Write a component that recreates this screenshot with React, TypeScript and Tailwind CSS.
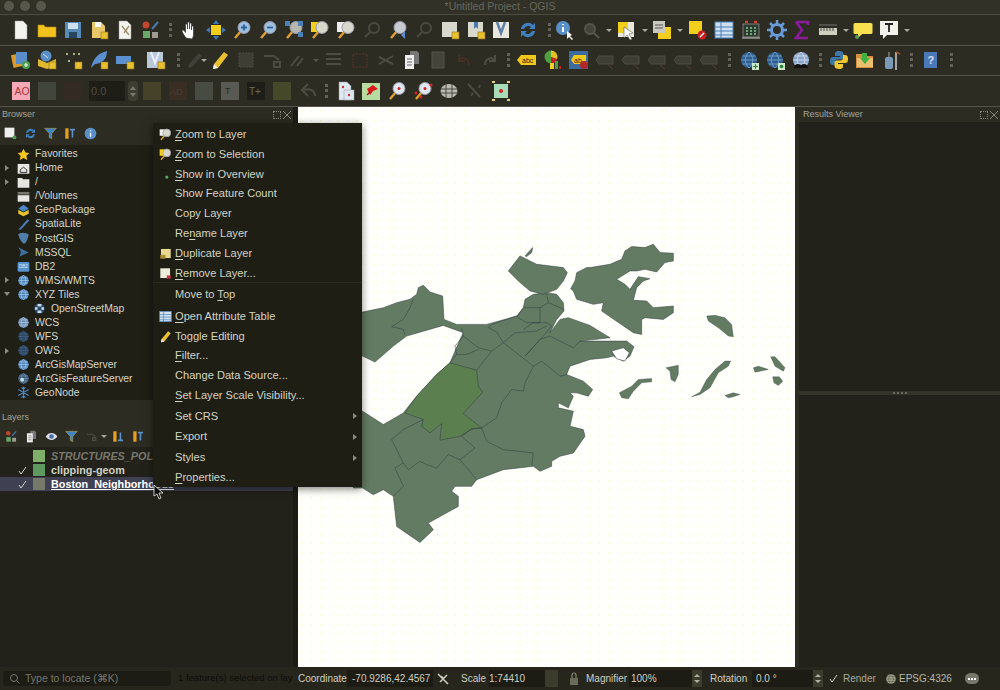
import React from "react";
import type { ReactNode } from "react";

const Mag = ({ c = "#d8d8d0", h = "#e0a030", k }: { c?: string; h?: string; k?: ReactNode }) => (
  <>
    <line x1="9" y1="11" x2="3" y2="18" stroke={h} strokeWidth="2.4" />
    <circle cx="12" cy="7.5" r="6" fill={c} stroke="#99a" strokeWidth="1" />
    {k}
  </>
);
const Doc = ({ c = "#f4f4ee" }: { c?: string }) => <path d="M4 1h8l4 4v14H4z" fill={c} stroke="#999" strokeWidth=".5" />;
const Badge = ({ c = "#e8c030" }: { c?: string }) => <rect x="12" y="12" width="7" height="7" fill={c} stroke="#8a7020" strokeWidth=".6" />;
const DimBox = () => <rect x="3" y="3" width="14" height="14" fill="#44443a" />;
const DimG = ({ d }: { d: string }) => <path d={d} fill="none" stroke="#4c4c42" strokeWidth="2" />;
const Globe = ({ c = "#4f86c0", l = "#a8cde8" }: { c?: string; l?: string }) => (
  <>
    <circle cx="10" cy="10" r="8" fill={c} />
    <path d="M2 10h16M10 2c-5 5-5 11 0 16M10 2c5 5 5 11 0 16M3.5 6h13M3.5 14h13" fill="none" stroke={l} strokeWidth=".8" />
  </>
);

const icons: Record<string, ReactNode> = {
  doc: <Doc />,
  folder: <path d="M1 5h6l1 2h11v10H1z" fill="#f2c31c" stroke="#b08a10" strokeWidth=".6" />,
  save: <><rect x="2" y="2" width="16" height="16" fill="#5a8ab8" /><rect x="5" y="3" width="10" height="6" fill="#cfe0ee" /><rect x="6" y="12" width="8" height="6" fill="#28445e" /></>,
  saveas: <><path d="M3 2h9l4 4v12H3z" fill="#e8c868" /><rect x="6" y="2" width="6" height="5" fill="#fff" /><Badge /></>,
  print: <><Doc /><path d="M7 6l7 9M14 6l-5 7" stroke="#a09070" strokeWidth="1.4" /></>,
  style: <><circle cx="5" cy="5" r="3.5" fill="#c0452c" /><path d="M11 9l6-7" stroke="#4a78b0" strokeWidth="2" /><rect x="2" y="11" width="7" height="7" fill="#68a868" /><rect x="11" y="12" width="6" height="6" fill="#a09a90" /></>,
  hand: <path d="M6 18c-2-3-4-6-4-7 0-1.500 1.500-1.500 2.500 0l1 1.500V5c0-1.500 2-1.500 2 0v4-6c0-1.500 2-1.500 2 0v6-5c0-1.500 2-1.500 2 0v6-3c0-1.500 2-1.500 2 0v7c0 3-1 4-1.500 5z" fill="#fff" stroke="#333" strokeWidth=".7" />,
  move: <><rect x="5" y="5" width="10" height="10" fill="#f2cf1c" /><path d="M10 0l3 4H7zM10 20l3-4H7zM0 10l4-3v6zM20 10l-4-3v6z" fill="#3e78b8" /></>,
  zin: <Mag c="#9cc0e0" k={<path d="M9 7.500h6M12 4.500v6" stroke="#2f5f98" strokeWidth="1.8" />} />,
  zout: <Mag c="#9cc0e0" k={<path d="M9 7.500h6" stroke="#2f5f98" strokeWidth="1.8" />} />,
  zfull: <><Mag c="#b8b8b0" /><path d="M1 1h5v5H1zM14 1h5v5h-5zM14 12h5v5h-5z" fill="#4a80b8" /></>,
  zsel: <><rect x="1" y="2" width="9" height="10" fill="#f2cf1c" /><Mag c="#d8d8cc" /></>,
  zlay: <><rect x="1" y="2" width="9" height="10" fill="#eee" /><Mag c="#d8d8cc" /></>,
  dimmag: <><circle cx="12" cy="8" r="5" fill="none" stroke="#4a4a40" strokeWidth="2" /><path d="M8 12l-5 5" stroke="#4a4a40" strokeWidth="2" /></>,
  zlast: <Mag c="#c8ccd0" k={<path d="M17 11l-4 4 4 4z" fill="#5a90d0" />} />,
  dimbox: <DimBox />,
  bookm: <><path d="M2 2h15v15H2z" fill="#d8d8cc" /><Badge /></>,
  bookm2: <><path d="M2 2h15v15H2z" fill="#d8d8cc" /><path d="M8 2h4v7l-2-2-2 2z" fill="#4a78b0" /><Badge /></>,
  halfdoc: <rect x="0" y="2" width="15" height="15" fill="#d8d8cc" />,
  vdoc: <><rect x="1" y="2" width="16" height="16" fill="#e8e8de" /><path d="M5 2l4 11 4-11" fill="none" stroke="#5f7fa8" strokeWidth="2.500" /></>,
  vdocb: <><rect x="1" y="2" width="16" height="16" fill="#b8c8d8" /><path d="M5 2l4 11 4-11" fill="none" stroke="#eef" strokeWidth="2" /><Badge /></>,
  refresh: <path d="M3 9a7 7 0 0 1 12-4l2-2v6h-6l2-2a4.500 4.500 0 0 0-7 2zM17 11a7 7 0 0 1-12 4l-2 2v-6h6l-2 2a4.500 4.500 0 0 0 7-2z" fill="#3f80c0" />,
  identify: <><circle cx="9" cy="8" r="7" fill="#5a90c8" /><path d="M9 4v1M9 7v5" stroke="#fff" strokeWidth="2" /><path d="M13 11l0 8 2-2 3 3 1-1-3-3 2-1z" fill="#fff" /></>,
  dimsearch: <><circle cx="9" cy="9" r="5" fill="#44443a" stroke="#56564a" strokeWidth="2" /><path d="M13 13l5 5" stroke="#56564a" strokeWidth="2" /></>,
  select: <><rect x="1" y="2" width="16" height="15" fill="#e8e8dc" /><rect x="1" y="2" width="10" height="11" fill="#f2cf1c" /><path d="M7 7l0 11 3-3 3 5 2-1-3-5 4-1z" fill="#fff" stroke="#444" strokeWidth=".5" /></>,
  selform: <><rect x="6" y="7" width="13" height="12" fill="#f2cf1c" /><rect x="1" y="1" width="12" height="12" fill="#c8c8c0" /><path d="M3 5h8M3 8h8" stroke="#555" strokeWidth="1" /></>,
  desel: <><rect x="1" y="1" width="13" height="13" fill="#f2cf1c" /><circle cx="14" cy="15" r="4.500" fill="#c82020" /><path d="M12 17l4-4" stroke="#fff" strokeWidth="1.200" /></>,
  table: <><rect x="1" y="2" width="18" height="16" fill="#cfe0f0" stroke="#4a80b8" /><path d="M1 7h18M1 11h18M1 15h18M7 2v16" stroke="#4a80b8" strokeWidth="1" /></>,
  toolbox: <><rect x="2" y="4" width="16" height="13" fill="#2e3a30" stroke="#aaa" strokeWidth=".6" /><path d="M4 2h3M13 2h3" stroke="#d04030" strokeWidth="2.500" /><path d="M5 8h2M9 8h2M13 8h2M5 11h2M9 11h2M13 11h2M5 14h2M9 14h2M13 14h2" stroke="#80d090" strokeWidth="1.500" /><path d="M1 18h18" stroke="#ccc" /></>,
  gear: <><circle cx="10" cy="10" r="5.500" fill="none" stroke="#6a9ad8" strokeWidth="3" /><path d="M10 0v4M10 16v4M0 10h4M16 10h4M3 3l3 3M14 14l3 3M17 3l-3 3M3 17l3-3" stroke="#6a9ad8" strokeWidth="2.500" /></>,
  sigma: <path d="M4 2h12v3M16 18H4l6-8-6-8" fill="none" stroke="#8a1c9c" strokeWidth="2.600" />,
  ruler: <><rect x="1" y="8" width="18" height="7" fill="#cfcfc0" /><path d="M3 8v3M6 8v3M9 8v3M12 8v3M15 8v3" stroke="#444" /><path d="M1 5h18" stroke="#777" /></>,
  balloon: <><path d="M2 3h16q1.500 0 1.500 1.500v8q0 1.500-1.500 1.500H9l-4 4v-4H2q-1.500 0-1.500-1.500v-8Q.5 3 2 3z" fill="#f8e050" /><circle cx="4" cy="17" r="2" fill="#5a9a5a" /></>,
  text: <><path d="M1 1h18v14H8l-4 4v-4H1z" fill="#f2f2ea" /><path d="M6 4h8M10 4v8" stroke="#222" strokeWidth="1.800" /></>,
  dsm: <><rect x="1" y="4" width="11" height="13" fill="#d89a30" transform="rotate(-12 6 10)" /><rect x="5" y="2" width="11" height="12" fill="#5a8ec8" /><circle cx="15" cy="15" r="4" fill="#4ca050" /><path d="M13 15h4M15 13v4" stroke="#fff" /></>,
  gpkg: <><path d="M1 9l9 4 9-4v7l-9 3-9-3z" fill="#e0b830" /><circle cx="9" cy="6" r="5.500" fill="#5a90c8" /><path d="M6 4l5 4" stroke="#ddd" /><Badge /></>,
  points: <><path d="M3 4h2M10 4h2M15 4h2" stroke="#cfe0b0" strokeWidth="1.600" /><path d="M5 11h2" stroke="#cfe0b0" strokeWidth="1.600" /><Badge /></>,
  feather: <><path d="M2 18C4 8 10 3 18 1c0 8-5 13-12 13z" fill="#5a90d0" /><Badge /></>,
  rectb: <><rect x="1" y="6" width="15" height="8" fill="#5a90d0" /><Badge /></>,
  pencil: <><path d="M14 2l4 3-10 13-5 1 1-5z" fill="#e8c030" /><path d="M3 19l1-5 4 4z" fill="#eee" /></>,
  pen2: <path d="M13 3l3 3-10 11-4 1 1-4z" fill="#40403a" />,
  dimsq: <rect x="3" y="3" width="14" height="14" fill="#3e3e34" stroke="#4a4a40" strokeDasharray="2 1" />,
  dimcar: <DimG d="M2 6h10l5 4M12 12h6v5h-6z" />,
  dimdiag: <DimG d="M3 16l8-10M9 16l6-8" />,
  dimlines: <DimG d="M2 4h15M2 9h15M2 14h15" />,
  dimred: <rect x="3" y="4" width="14" height="13" fill="none" stroke="#4a3028" strokeWidth="1.500" strokeDasharray="2 1" />,
  dimcut: <DimG d="M3 7l14 7M3 14l14-8" />,
  copyd: <><path d="M8 1h7l2 2v11H8z" fill="#777" /><path d="M3 5h9v14H3z" fill="#eee" /><path d="M5 9h5M5 12h5M5 15h5" stroke="#666" /></>,
  dimclip: <rect x="4" y="2" width="12" height="16" fill="#44443a" stroke="#52524a" />,
  dimred2: <path d="M15 15c0-8-8-8-10-4M5 5v6h6" fill="none" stroke="#463024" strokeWidth="2" />,
  dimredo: <DimG d="M5 15c0-8 8-8 10-4M15 5v6H9" />,
  abc: <><path d="M0 10l4-5h15v10H4z" fill="#f0c818" /><text x="5" y="13" fontSize="7" fill="#222" fontFamily="Liberation Sans">abc</text></>,
  pie: <><circle cx="8" cy="7" r="6.500" fill="#50a040" /><path d="M8 7V.5A6.500 6.500 0 0 1 14 9z" fill="#e8c020" /><path d="M8 7l6 2a6.500 6.500 0 0 1-6 4.500z" fill="#c82020" /><rect x="7" y="13" width="4" height="6" fill="#f0d020" /><rect x="12" y="11" width="3" height="8" fill="#50a040" /><rect x="16" y="16" width="2" height="3" fill="#c82020" /></>,
  abcb: <><rect x="0" y="1" width="19" height="18" fill="#3a6ca0" /><path d="M2 10l3-5h12v9H5z" fill="#f0c818" /><text x="5" y="12.500" fontSize="7" fill="#222" fontFamily="Liberation Sans">ab</text><circle cx="15" cy="15" r="4" fill="#b02828" /></>,
  dimabc: <><path d="M1 10l3-4h14v8H4z" fill="#3e3e34" stroke="#4c4c42" /><path d="M13 15l5 4" stroke="#48382e" strokeWidth="1.500" /></>,
  wms: <><Globe c="#2f5f90" l="#79a6cc" /><rect x="13" y="13" width="7" height="7" fill="#c8e8c8" /><path d="M14 16.500h5M16.500 14v5" stroke="#2a8040" /></>,
  wfs: <><Globe c="#2f5f90" l="#79a6cc" /><rect x="13" y="13" width="7" height="7" fill="#c8e8c8" /><circle cx="16.500" cy="16.500" r="1.800" fill="#2a8040" /></>,
  metasearch: <><Globe c="#8aa8cc" l="#dde" /><path d="M3 18c0-3 2-4 4-4s2 1 3 1 1-1 3-1 4 1 4 4z" fill="#111" /></>,
  python: <><path d="M10 1C6 1 6 3 6 4v2h5v1H4C2 7 1 8 1 11s1 4 3 4h2v-3c0-1.500 1-2.500 2.500-2.500h4c1 0 2-1 2-2V4c0-2-2-3-4.500-3z" fill="#3c78a8" /><path d="M10 19c4 0 4-2 4-3v-2H9v-1h7c2 0 3-1 3-4s-1-4-3-4h-2v3c0 1.500-1 2.500-2.500 2.500h-4c-1 0-2 1-2 2V16c0 2 2 3 4.500 3z" fill="#f0c830" /></>,
  plugin: <><path d="M1 4h7l2 2h8v12H1z" fill="#d89040" /><rect x="2" y="8" width="16" height="9" fill="#e8c070" /><path d="M7 3h5v5h3l-5 6-5-6h2z" fill="#40b040" /></>,
  gps: <><rect x="4" y="7" width="8" height="12" rx="2" fill="#7a9ab8" /><path d="M8 2v5" stroke="#aaa" /><path d="M15 2v18" stroke="#ccc" strokeWidth="1.500" /><path d="M15 2l4 2" stroke="#a05030" strokeWidth="1.500" /></>,
  help: <><rect x="3" y="2" width="13" height="16" fill="#4a78b8" /><text x="6.500" y="14" fontSize="11" fontWeight="700" fill="#dde" fontFamily="Liberation Sans">?</text></>,
  ad: <><rect x="1" y="1" width="18" height="18" fill="#f4a8b8" /><text x="3.500" y="14" fontSize="10.500" fill="#a83838" fontFamily="Liberation Sans">AO</text></>,
  b1: <rect x="1" y="1" width="18" height="18" fill="#42453c" />,
  b2: <rect x="1" y="1" width="18" height="18" fill="#332a24" />,
  b3: <rect x="1" y="1" width="18" height="18" fill="#46422a" />,
  b4: <><rect x="1" y="1" width="18" height="18" fill="#3a2e24" /><text x="2" y="13.500" fontSize="9" fill="#4e3a30" fontFamily="Liberation Sans">AD</text></>,
  b5: <rect x="1" y="1" width="18" height="18" fill="#474b42" />,
  b6: <><rect x="1" y="1" width="18" height="18" fill="#5a5a54" /><text x="5" y="13" fontSize="9" fill="#2a2a24" fontFamily="Liberation Sans">T</text></>,
  b7: <><rect x="1" y="1" width="18" height="18" fill="#1e1e18" /><text x="3" y="14" fontSize="10" fill="#6a6a60" fontFamily="Liberation Sans">T+</text></>,
  b8: <rect x="1" y="1" width="18" height="18" fill="#46482a" />,
  dimback: <DimG d="M17 15c0-6-6-8-11-6M10 3L4 9l6 6" />,
  pinned: <><Doc c="#dde8f0" /><rect x="9" y="9" width="10" height="10" fill="#dde8f0" stroke="#99a" strokeWidth=".5" /><circle cx="14" cy="14" r="1.200" fill="#d03030" /><circle cx="8" cy="6" r="1.200" fill="#d03030" /></>,
  pin: <><rect x="1" y="2" width="18" height="17" fill="#b8dca0" /><path d="M12 4l5 4-5 2-3 4-3-6z" fill="#d81818" /><path d="M6 14l3-3" stroke="#a01010" strokeWidth="1.500" /></>,
  magred: <Mag c="#dfe8f0" k={<circle cx="12" cy="7.500" r="1.500" fill="#d82020" />} />,
  magreds: <Mag c="#dfe8f0" k={<><circle cx="12" cy="7.500" r="1.500" fill="#d82020" /><circle cx="18" cy="4" r="1.500" fill="#d82020" /><circle cx="3" cy="12" r="1.500" fill="#d82020" /><circle cx="8" cy="16" r="1.500" fill="#d82020" /></>} />,
  globeg: <><ellipse cx="10" cy="10" rx="8.500" ry="7" fill="#b8b8b0" /><path d="M2 8h16M2 12h16M7 3v14M13 3v14" stroke="#4a4a44" strokeWidth="1" /></>,
  dimstar: <DimG d="M3 3l12 13M15 4l-1 3M6 15l2-3" />,
  annot: <><rect x="3" y="3" width="14" height="14" fill="#a8dcb8" /><circle cx="10" cy="10" r="2" fill="#e02020" /><path d="M1 1h3M16 1h3M1 19h3M16 19h3" stroke="#e8d080" strokeWidth="2" /></>,
  newconn: <><rect x="1" y="1" width="15" height="15" fill="#eee" /><circle cx="16" cy="16" r="3" fill="#4ca050" /></>,
  filter: <path d="M1 2h18l-7 8v8l-4-2v-6z" fill="#3f86c8" stroke="#c8a030" strokeWidth=".8" />,
  coll: <><path d="M2 2h5v16H2z" fill="#e8a020" /><path d="M9 4h8M13 4v12" stroke="#5a90c8" strokeWidth="2.500" /></>,
  info: <><circle cx="10" cy="10" r="9" fill="#5a90c8" /><path d="M10 5v1.500M10 9v6" stroke="#fff" strokeWidth="2" /></>,
  eye: <><path d="M1 10c5-7 13-7 18 0-5 7-13 7-18 0z" fill="#dde" /><circle cx="10" cy="10" r="3.500" fill="#3f6f9f" /></>,
  expand: <><path d="M2 2h5v16H2z" fill="#e8a020" /><path d="M9 16h8M13 4v12" stroke="#5a90c8" strokeWidth="2.500" /></>,
};

const I = ({ n, c = "w-[26px]", s = 20 }: { n: string; c?: string; s?: number }) => (
  <div className={`flex shrink-0 items-center justify-center ${c}`}>
    <svg viewBox="0 0 20 20" width={s} height={s} className="shrink-0 overflow-visible">{icons[n]}</svg>
  </div>
);
const Grip = ({ c = "w-[16px]" }: { c?: string }) => (
  <div className={`flex shrink-0 items-center justify-center ${c}`}>
    <div className="h-[14px] w-0 border-l-[3px] border-dotted border-[#62625a]" />
  </div>
);
const Arrow = ({ c = "w-[10px]", dim }: { c?: string; dim?: boolean }) => (
  <div className={`flex shrink-0 items-center justify-center ${c}`}>
    <div className={`h-0 w-0 border-x-[3px] border-t-[3px] border-x-transparent ${dim ? "border-t-[#55554b]" : "border-t-[#a8a8a0]"}`} />
  </div>
);
const Row = ({ children, c }: { children: ReactNode; c: string }) => (
  <div className={`flex shrink-0 items-center border-b border-[#55554a] pl-[8px] ${c}`}>{children}</div>
);

const Dock = ({ title, c = "" }: { title: string; c?: string }) => (
  <div className={`flex h-[15px] shrink-0 items-center justify-between pr-[2px] text-[9px] text-[#a4a49a] ${c}`}>
    <span>{title}</span>
    <div className="flex gap-[2px]">
      <div className="h-[8px] w-[8px] border border-dotted border-[#85857a]" />
      <svg width="8" height="8" viewBox="0 0 8 8"><path d="M0 0l8 8M8 0L0 8" stroke="#85857a" /></svg>
    </div>
  </div>
);

const tree: [string, string, number?, ("r" | "d")?][] = [
  ["star", "Favorites"],
  ["home", "Home", 0, "r"],
  ["fold", "/", 0, "r"],
  ["vol", "/Volumes"],
  ["gp", "GeoPackage"],
  ["sl", "SpatiaLite"],
  ["pg", "PostGIS"],
  ["ms", "MSSQL"],
  ["db2", "DB2"],
  ["g1", "WMS/WMTS", 0, "r"],
  ["g1", "XYZ Tiles", 0, "d"],
  ["osm", "OpenStreetMap", 1],
  ["g2", "WCS"],
  ["g3", "WFS"],
  ["g3", "OWS", 0, "r"],
  ["g1", "ArcGisMapServer"],
  ["g4", "ArcGisFeatureServer"],
  ["flake", "GeoNode"],
];
const treeIcons: Record<string, ReactNode> = {
  star: <path d="M10 1l3 6 6 .8-4.500 4.200 1.200 6.500L10 15.300 4.300 18.500l1.200-6.500L1 7.800 7 7z" fill="#f4c820" />,
  home: <><path d="M1 3h18v15H1z" fill="#e8e8e0" /><path d="M5 12l5-4 5 4v4H5z" fill="none" stroke="#333" strokeWidth="1.500" /></>,
  fold: <path d="M1 3h7l1 2h10v13H1z" fill="#e6e6de" />,
  vol: <><path d="M1 3h18v4H1z" fill="#77776e" /><path d="M1 8h18v10H1z" fill="#e6e6de" /></>,
  gp: <><path d="M2 9l8 4 8-4v6l-8 4-8-4z" fill="#e8c430" /><path d="M10 1l8 6-8 5-8-5z" fill="#4a88c8" /></>,
  sl: <path d="M2 18L16 2l3 2L6 18z" fill="#4a78b0" />,
  pg: <path d="M2 3c6-3 12-2 16 1-1 6-4 14-7 14S3 10 2 3z" fill="#4f7ea8" />,
  ms: <path d="M2 2l16 8-14 6 2-7z" fill="#3f6f9f" />,
  db2: <><rect x="1" y="3" width="18" height="15" rx="2" fill="#5a94cc" /><text x="3" y="13" fontSize="7" fill="#d8e8f8" fontFamily="Liberation Sans">DB2</text></>,
  g1: <Globe c="#4f86c0" l="#b8d8ee" />,
  g2: <Globe c="#6a8eb8" l="#c8d8e8" />,
  g3: <Globe c="#2a4460" l="#4a6c90" />,
  g4: <><Globe c="#3a5a7c" l="#7a9ab8" /><circle cx="8" cy="12" r="3" fill="#c8d8e0" /></>,
  osm: <><circle cx="10" cy="10" r="8" fill="#2a4868" /><path d="M7 3h6v4H7zM3 8h4v4H3zM13 8h4v4h-4zM7 13h6v4H7z" fill="#c8dcee" /></>,
  flake: <path d="M10 1v18M2 5.500l16 9M18 5.500l-16 9M7 2l3 3 3-3M7 18l3-3 3 3" fill="none" stroke="#4f86c0" strokeWidth="1.800" />,
};

type M = { t: ReactNode; h: string; i?: string; sub?: boolean; line?: boolean };
const U = ({ children }: { children: ReactNode }) => <u className="underline-offset-2">{children}</u>;
const menu: M[] = [
  { t: <><U>Z</U>oom to Layer</>, h: "h-[20px]", i: "zlay" },
  { t: <><U>Z</U>oom to Selection</>, h: "h-[20px]", i: "zsel" },
  { t: <><U>S</U>how in Overview</>, h: "h-[20px]", i: "ov" },
  { t: "Show Feature Count", h: "h-[19px]" },
  { t: "Copy Layer", h: "h-[20px]" },
  { t: <>Re<U>n</U>ame Layer</>, h: "h-[20px]" },
  { t: <><U>D</U>uplicate Layer</>, h: "h-[21px]", i: "dup" },
  { t: <><U>R</U>emove Layer...</>, h: "h-[19px]", i: "rem", line: true },
  { t: <>Move to <U>T</U>op</>, h: "h-[23px]" },
  { t: <><U>O</U>pen Attribute Table</>, h: "h-[20px]", i: "table" },
  { t: "Toggle Editing", h: "h-[20px]", i: "pencil" },
  { t: <><U>F</U>ilter...</>, h: "h-[19px]" },
  { t: "Change Data Source...", h: "h-[20px]" },
  { t: <><U>S</U>et Layer Scale Visibility...</>, h: "h-[21px]" },
  { t: "Set CRS", h: "h-[20px]", sub: true },
  { t: "Export", h: "h-[21px]", sub: true },
  { t: "Styles", h: "h-[21px]", sub: true },
  { t: <><U>P</U>roperties...</>, h: "h-[19px]" },
];
const menuIcons: Record<string, ReactNode> = {
  ...icons,
  ov: <><path d="M3 3h4M9 3h3" stroke="#111" strokeWidth="2" /><circle cx="12" cy="14" r="2.500" fill="#58a868" /></>,
  dup: <><rect x="3" y="3" width="15" height="14" fill="#e8d890" /><rect x="2" y="12" width="8" height="6" fill="#a88a30" /></>,
  rem: <><rect x="2" y="2" width="15" height="15" fill="#eeeedc" /><rect x="12" y="13" width="6" height="5" fill="#c83040" /></>,
};

const STROKE = "#2e3d40";
const FILL = "#637b62";
const BostonMap = () => (
  <svg viewBox="298 108 497 559" className="block h-full w-full" preserveAspectRatio="none">
    <g transform="translate(360 240) scale(0.33333)" fill={FILL} stroke={STROKE} strokeWidth="1.500" strokeLinejoin="round">
      <path d="M-20 218L8 218 70 205 110 190 150 180 170 165 175 145 190 138 210 158 248 170 252 240 290 255 380 255 470 230 490 205 495 180 520 165 560 160 590 165 610 190 612 215 590 240 570 280 600 240 625 235 690 258 750 295 660 305 800 305 822 322 810 350 790 365 760 350 740 355 690 360 630 380 620 405 670 425 698 450 685 470 650 460 630 460 640 470 625 505 595 490 595 505 640 515 630 560 670 570 675 590 640 640 600 650 575 665 575 680 540 695 520 680 430 690 350 720 335 740 285 740 275 755 295 770 295 800 205 850 220 870 180 908 110 860 100 770 70 750 40 765 8 745 -20 745 -20 515 8 515 70 555 130 520 170 470 230 405 270 370 300 300 310 280 250 258 140 290 100 320 45 368 8 350 -20 350Z" />
      <path fill="#ffffff" d="M755 335L790 325 808 340 795 365 770 358Z" />
      <path fill="#5c7f50" d="M270 370L350 392 355 440 368 458 310 522 365 565 335 568 300 590 240 602 245 552 210 580 185 560 190 540 135 520 170 470 230 405Z" />
      <path fill="none" d="M95 262L130 240 150 205 160 180M95 262L130 270 135 285M305 265L310 290 285 320 290 345 270 370M350 392L395 335 430 310 465 280 530 275 560 260M310 290L355 325 395 335M290 345L320 345 355 330M385 265L395 255 470 230M385 265L410 278 430 310 520 380 495 430 490 455 455 450 425 490 410 535 365 565 380 605 430 630 520 640 515 680M365 565L335 568 305 590 345 625 300 660 265 645 230 685 200 675 180 665 145 690 130 670 95 600 130 570 190 540M300 660L350 720M130 670L105 685 130 740 100 770M520 380L545 365 600 410 620 405M495 350L540 300 570 290 640 325 660 305M470 235L490 205 540 205 540 250 500 250 475 235M490 270L520 250 560 250 575 260 550 290 495 350M560 165L565 190 612 210M540 205L565 190" />
      <path d="M445 95L480 50 530 75 610 85 622 100 610 125 590 150 550 165 510 155 475 125Z" />
      <path d="M495 50L518 25 515 40 500 52Z" />
      <path d="M690 85L750 75 785 60 795 35 815 22 855 25 880 15 900 40 940 42 940 65 915 70 890 98 855 90 830 95 810 95 770 120 795 135 810 150 835 112 870 118 850 125 830 145 820 183 860 185 880 205 940 200 940 220 910 240 855 235 845 240 845 285 820 280 725 215 730 190 700 195 650 180 640 155 632 148 645 125 650 100 680 85Z" />
    </g>
    <g transform="translate(600 300) scale(0.33333)" fill={FILL} stroke={STROKE} strokeWidth="1" strokeLinejoin="round">
      <path d="M320 50L345 48 375 55 395 75 400 112 385 110 355 85 325 65Z" />
      <path d="M512 172L525 172 555 205 550 215 525 200Z" />
      <path d="M460 205L475 200 505 210 480 215 465 218Z" />
      <path d="M518 232L538 232 548 245 535 258 522 250Z" />
      <path d="M375 288L400 280 420 285 400 292 385 295Z" />
      <path d="M198 205L235 197 235 225 225 247 213 240 210 215Z" />
      <path d="M275 292L300 278 320 240 345 210 375 185 392 185 385 200 355 220 330 265 300 285Z" />
      <path d="M58 280L95 260 115 240 155 237 155 247 125 250 100 275 85 298 65 295Z" />
    </g>
  </svg>
);

const Field = ({ c, children }: { c: string; children: ReactNode }) => (
  <div className={`flex h-[17px] shrink-0 items-center bg-[#1c1c14] text-[#cfcfc2] ${c}`}>{children}</div>
);
const Spin = () => (
  <div className="flex h-[17px] w-[10px] shrink-0 flex-col items-center justify-center gap-[3px] bg-[#3c3c2c]">
    <div className="h-0 w-0 border-x-[3px] border-b-[3px] border-x-transparent border-b-[#b0b0a0]" />
    <div className="h-0 w-0 border-x-[3px] border-t-[3px] border-x-transparent border-t-[#b0b0a0]" />
  </div>
);

export default function App() {
  return (
    <div className="relative flex h-[690px] w-[1000px] flex-col overflow-hidden bg-[#2c2c22] [font-family:'Liberation_Sans',Arial,sans-serif]">
      {/* title bar */}
      <div className="relative flex h-[15px] shrink-0 items-center justify-center border-b border-[#4c4c40] bg-[#313128] text-[10.5px] text-[#67675a]">
        <div className="absolute left-[4px] top-[1px] flex gap-[6px]">
          <div className="h-[10px] w-[10px] rounded-full bg-[#57574c]" />
          <div className="h-[10px] w-[10px] rounded-full bg-[#57574c]" />
          <div className="h-[10px] w-[10px] rounded-full bg-[#57574c]" />
        </div>
        *Untitled Project - QGIS
      </div>

      {/* toolbar 1 */}
      <Row c="h-[31px]">
        <I n="doc" /><I n="folder" /><I n="save" /><I n="saveas" /><I n="print" /><I n="style" />
        <Grip c="w-[13px]" />
        <I n="hand" /><I n="move" /><I n="zin" /><I n="zout" /><I n="zfull" /><I n="zsel" /><I n="zlay" /><I n="dimmag" /><I n="zlast" /><I n="dimmag" /><I n="bookm" /><I n="bookm2" /><I n="vdoc" /><I n="refresh" />
        <Grip />
        <I n="identify" c="w-[14px]" />
        <I n="dimsearch" c="ml-[7px] w-[26px]" /><Arrow />
        <I n="select" /><Arrow />
        <I n="selform" c="w-[24px]" /><Arrow c="w-[12px]" />
        <I n="desel" c="w-[24px]" />
        <I n="table" c="ml-px w-[26px]" />
        <I n="toolbox" c="ml-px w-[26px]" />
        <I n="gear" /><I n="sigma" c="w-[24px]" />
        <I n="ruler" c="ml-px w-[26px]" /><Arrow />
        <I n="balloon" c="w-[24px]" />
        <I n="text" c="ml-px w-[26px]" /><Arrow />
      </Row>
      {/* toolbar 2 */}
      <Row c="h-[30px] pb-px">
        <I n="dsm" /><I n="gpkg" /><I n="points" /><I n="feather" /><I n="rectb" /><I n="vdocb" c="ml-[5px] w-[26px]" />
        <Grip c="w-[18px]" />
        <I n="pen2" c="w-[18px]" /><Arrow c="-ml-[4px] w-[6px]" />
        <I n="pencil" />
        <I n="dimsq" /><I n="dimcar" />
        <I n="dimdiag" /><Arrow dim />
        <I n="dimlines" /><I n="dimred" /><I n="dimcut" /><I n="copyd" /><I n="dimclip" /><I n="dimred2" /><I n="dimredo" />
        <Grip c="w-[11px]" />
        <I n="abc" /><I n="pie" /><I n="abcb" /><I n="dimabc" /><I n="dimabc" /><I n="dimabc" /><I n="dimabc" /><I n="dimabc" />
        <Grip c="w-[14px]" />
        <I n="wms" /><I n="wfs" /><I n="metasearch" />
        <Grip c="w-[12px]" />
        <I n="python" /><I n="plugin" /><I n="gps" />
        <Grip c="w-[15px]" />
        <I n="help" c="w-[24px]" />
        <Grip />
      </Row>
      {/* toolbar 3 */}
      <Row c="h-[31px]">
        <I n="ad" /><I n="b1" /><I n="b2" />
        <div className="ml-[3px] flex h-[20px] w-[36px] shrink-0 items-center bg-[#1e1e16] pl-[2px] text-[11px] text-[#4c4c40]">0.0</div>
        <div className="ml-[3px] mr-px flex h-[20px] w-[10px] shrink-0 flex-col items-center justify-center gap-[3px] rounded-sm bg-[#3e3e32]">
          <div className="h-0 w-0 border-x-[3px] border-b-[4px] border-x-transparent border-b-[#77776c]" />
          <div className="h-0 w-0 border-x-[3px] border-t-[4px] border-x-transparent border-t-[#77776c]" />
        </div>
        <I n="b3" /><I n="b4" /><I n="b5" /><I n="b6" /><I n="b7" /><I n="b8" /><I n="dimback" />
        <Grip c="w-[11px]" />
        <I n="pinned" /><I n="pin" /><I n="magred" /><I n="magreds" /><I n="globeg" /><I n="dimstar" /><I n="annot" />
      </Row>

      {/* main */}
      <div className="flex min-h-0 flex-1">
        {/* left docks */}
        <div className="flex w-[293px] shrink-0 flex-col">
          <Dock title="Browser" c="pl-[2px]" />
          <div className="flex h-[23px] shrink-0 items-center">
            <I n="newconn" c="w-[20px]" s={13} />
            <I n="refresh" c="w-[20px]" s={13} />
            <I n="filter" c="w-[20px]" s={13} />
            <I n="coll" c="w-[20px]" s={13} />
            <I n="info" c="w-[20px]" s={13} />
          </div>
          <div className="h-[255px] shrink-0 bg-[#1f1f16] pt-[2px] text-[10.4px] text-[#d6d6c8]">
            {tree.map(([ic, t, ind, ex]) => (
              <div key={t} className="relative flex h-[14.06px] items-center">
                {ex === "r" && <div className="absolute left-[5px] h-0 w-0 border-y-[3px] border-l-[4px] border-y-transparent border-l-[#8a8a80]" />}
                {ex === "d" && <div className="absolute left-[4px] h-0 w-0 border-x-[3px] border-t-[4px] border-x-transparent border-t-[#8a8a80]" />}
                {ind ? <div className="w-[16px] shrink-0" /> : null}
                <div className="ml-[17px] mr-[5px] flex w-[13px] shrink-0 items-center justify-center">
                  <svg viewBox="0 0 20 20" width="13" height="13" className="overflow-visible">{treeIcons[ic]}</svg>
                </div>
                <span className="whitespace-nowrap">{t}</span>
              </div>
            ))}
          </div>
          <div className="h-[10px] shrink-0" />
          <Dock title="Layers" c="pl-[2px]" />
          <div className="flex h-[22px] shrink-0 items-center pl-[1px]">
            <I n="style" c="w-[20px]" s={13} />
            <I n="copyd" c="w-[20px]" s={13} />
            <I n="eye" c="w-[20px]" s={13} />
            <I n="filter" c="w-[20px]" s={13} />
            <I n="dimcar" c="w-[20px]" s={11} /><Arrow c="w-[6px]" />
            <I n="expand" c="w-[22px]" s={13} />
            <I n="coll" c="w-[18px]" s={13} />
          </div>
          <div className="min-h-0 flex-1 bg-[#22221a] pt-[2px] text-[10.8px]">
            {[
              { t: "STRUCTURES_POLY", swatch: "bg-[#7fb069]", chk: false, c: "font-bold italic text-[#77776c]", bg: "" },
              { t: "clipping-geom", swatch: "bg-[#5e9a60]", chk: true, c: "font-bold text-[#d0d0c2]", bg: "" },
              { t: "Boston_Neighborhoods", swatch: "bg-[#76786a]", chk: true, c: "font-bold text-white underline", bg: "bg-[#3f4052]" },
            ].map((r) => (
              <div key={r.t} className={`flex h-[14px] items-center ${r.bg}`}>
                <div className="flex w-[33px] shrink-0 justify-end pr-[6px]">
                  {r.chk && <svg width="9" height="9" viewBox="0 0 9 9"><path d="M1 5l2 3 5-7" fill="none" stroke="#d0d0c8" strokeWidth="1" /></svg>}
                </div>
                <div className={`mr-[6px] h-[12px] w-[12px] shrink-0 ${r.swatch}`} />
                <span className={`whitespace-nowrap ${r.c}`}>{r.t}</span>
              </div>
            ))}
          </div>
        </div>
        <div className="w-[5px] shrink-0 bg-[#1c1c14]" />
        {/* canvas */}
        <div className="w-[497px] shrink-0 bg-[#fffffb] bg-[radial-gradient(#f8f4c0_0.7px,transparent_1px)] bg-[length:9px_9px]">
          <BostonMap />
        </div>
        <div className="flex w-[4px] shrink-0 items-center justify-center bg-[#2c2c22]" />
        {/* right docks */}
        <div className="flex w-[201px] shrink-0 flex-col">
          <Dock title="Results Viewer" c="pl-[4px]" />
          <div className="h-[269px] shrink-0 bg-[#22221a]" />
          <div className="flex h-[4px] shrink-0 items-center justify-center bg-[#34342a]">
            <div className="h-[2px] w-[14px] border-t-2 border-dotted border-[#6a6a60]" />
          </div>
          <div className="min-h-0 flex-1 bg-[#22221a]" />
        </div>
      </div>

      {/* status bar */}
      <div className="flex h-[23px] shrink-0 items-center bg-[#26261c] text-[10px] text-[#cfcfc2]">
        <div className="ml-[3px] flex h-[15px] w-[168px] shrink-0 items-center rounded-sm bg-[#1c1c14] pl-[6px] text-[10.5px] text-[#77776c]">
          <svg width="11" height="11" viewBox="0 0 11 11" className="mr-[5px] shrink-0"><circle cx="5" cy="5" r="3.500" fill="none" stroke="#77776c" /><path d="M7.500 7.500l3 3" stroke="#77776c" /></svg>
          <span>Type to locate (⌘K)</span>
        </div>
        <div className="ml-[7px] w-[120px] shrink-0 whitespace-nowrap text-[9.5px] text-[#0e0e0a]">1 feature(s) selected on lay</div>
        <span className="w-[49px] shrink-0">Coordinate</span>
        <Field c="w-[86px] pl-[5px]">-70.9286,42.4567</Field>
        <div className="flex w-[20px] shrink-0 justify-center">
          <svg width="12" height="12" viewBox="0 0 12 12"><path d="M1 1l10 10M3 9l7-7M4 3l3 3" stroke="#cfcfc2" strokeWidth="1.500" /></svg>
        </div>
        <span className="ml-[8px] w-[27px] shrink-0">Scale</span>
        <Field c="ml-px w-[56px]">1:74410</Field>
        <div className="h-[17px] w-[13px] shrink-0 bg-[#3c3c2c]" />
        <div className="ml-[4px] flex w-[24px] shrink-0 justify-center">
          <svg width="10" height="13" viewBox="0 0 10 13"><rect x="1" y="6" width="8" height="7" fill="#6a6a58" /><path d="M3 6V3a2 2 0 0 1 4 0v3" fill="none" stroke="#8a8a78" strokeWidth="1.200" /></svg>
        </div>
        <span className="w-[43px] shrink-0">Magnifier</span>
        <Field c="w-[63px] pl-[2px]">100%</Field>
        <Spin />
        <span className="ml-[8px] w-[38px] shrink-0">Rotation</span>
        <Field c="ml-[4px] w-[61px] pl-[4px]">0.0 °</Field>
        <Spin />
        <div className="flex w-[20px] shrink-0 justify-center">
          <svg width="9" height="9" viewBox="0 0 9 9"><path d="M1 5l2 3 5-7" fill="none" stroke="#cfcfc2" /></svg>
        </div>
        <span className="w-[33px] shrink-0 text-[#a8a89c]">Render</span>
        <div className="ml-[9px] mr-[2px] flex shrink-0">
          <svg viewBox="0 0 20 20" width="12" height="12"><Globe c="#a8a890" l="#44443a" /></svg>
        </div>
        <span className="w-[53px] shrink-0 text-[#b8b8aa]">EPSG:4326</span>
        <div className="ml-[13px] flex h-[11px] w-[14px] shrink-0 items-center justify-center gap-px rounded-full bg-[#77776c]">
          <div className="h-[2px] w-[2px] bg-white" /><div className="h-[2px] w-[2px] bg-white" /><div className="h-[2px] w-[2px] bg-white" />
        </div>
      </div>

      {/* context menu */}
      <div className="absolute left-[153px] top-[123px] flex w-[209px] flex-col bg-[#1e1e14] pt-px text-[11.1px] text-[#d4d4c4] shadow-[0_2px_8px_rgba(0,0,0,0.5)]">
        {menu.map((m, i) => (
          <div key={i} className={`relative flex items-center pl-[22px] ${m.h} ${m.line ? "border-b border-[#2a2a20]" : ""}`}>
            {m.i && (
              <svg viewBox="0 0 20 20" width="13" height="13" className="absolute left-[6px] overflow-visible">{menuIcons[m.i]}</svg>
            )}
            <span className="whitespace-nowrap">{m.t}</span>
            {m.sub && <div className="absolute right-[5px] h-0 w-0 border-y-[3px] border-l-[4px] border-y-transparent border-l-[#8a8a80]" />}
          </div>
        ))}
      </div>

      {/* mouse cursor */}
      <svg width="12" height="16" viewBox="0 0 12 16" className="absolute left-[153px] top-[484px]">
        <path d="M1 1v11l3-2 2 5 2-1-2-5h4z" fill="#111" stroke="#eee" strokeWidth=".8" />
      </svg>
    </div>
  );
}
